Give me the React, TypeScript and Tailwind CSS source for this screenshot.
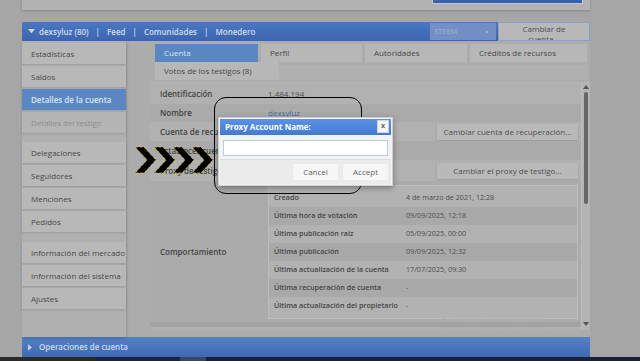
import React from "react";

const font = { fontFamily: '"Open Sans", "Noto Sans", sans-serif' };

function SideItem({ label, selected, disabled }: { label: string; selected?: boolean; disabled?: boolean }) {
  return (
    <div
      className={
        "h-[21px] flex items-center pl-[9px] text-[8px] whitespace-nowrap overflow-hidden shadow-[0_1px_2px_rgba(0,0,0,0.12)] " +
        (selected
          ? "bg-[#5a86c1] text-[#dde5f1] font-semibold"
          : disabled
          ? "bg-[#b4b4b4] text-[#8f8f8f]"
          : "bg-[#b8b8b8] text-[#484848]")
      }
    >
      {label}
    </div>
  );
}

function Tab({ label, w, selected }: { label: string; w: string; selected?: boolean }) {
  return (
    <div
      className={
        w +
        " h-[18px] flex items-center pl-[9px] text-[8px] " +
        (selected ? "bg-[#5a86c1] text-[#dde5f1]" : "bg-[#b7b7b7] text-[#484848]")
      }
    >
      {label}
    </div>
  );
}

function Row({
  label,
  value,
  button,
  dark,
  h,
  link,
}: {
  label: string;
  value?: string;
  button?: string;
  dark?: boolean;
  h: string;
  link?: boolean;
}) {
  return (
    <div className={"flex items-center " + h + " " + (dark ? "bg-[#aaaaaa]" : "bg-[#b1b1b1]")}>
      <div className="w-[118px] pl-[10px] text-[8px] font-semibold text-[#434343] whitespace-nowrap overflow-hidden">{label}</div>
      <div className={"flex-1 text-[8px] " + (link ? "text-[#4d6a96]" : "text-[#4e4e4e]")}>{value}</div>
      {button && (
        <div className="mr-[3px] w-[141px] h-[16px] flex items-center justify-center bg-[#b9b9b9] text-[8px] text-[#505050] shadow-[0_1px_2px_rgba(0,0,0,0.15)]">
          {button}
        </div>
      )}
    </div>
  );
}

const behav: [string, string][] = [
  ["Creado", "4 de marzo de 2021, 12:28"],
  ["Última hora de votación", "09/09/2025, 12:18"],
  ["Última publicación raíz", "05/09/2025, 00:00"],
  ["Última publicación", "09/09/2025, 12:32"],
  ["Última actualización de la cuenta", "17/07/2025, 09:30"],
  ["Última recuperación de cuenta", "-"],
  ["Última actualización del propietario", "-"],
];

function Chevrons() {
  const pts = (o: number) =>
    `${o},1 ${o + 9},1 ${o + 21},14 ${o + 9},27 ${o},27 ${o + 12},14`;
  return (
    <svg width="84" height="30" viewBox="0 0 84 30" className="absolute left-[134px] top-[146px]">
      {[0, 19, 38, 57].map((o) => (
        <polygon key={o} points={pts(o + 1)} fill="#000" stroke="#e2c53a" strokeWidth="0.8" strokeDasharray="3 1.5" />
      ))}
    </svg>
  );
}

export default function App() {
  return (
    <div className="relative w-[640px] h-[361px] bg-[#a6a6a6] overflow-hidden" style={font}>
      <div className="ml-[22px] w-[568px]">
        {/* top card */}
        <div className="h-[10px] bg-[#b2b2b2] shadow-[0_1px_3px_rgba(0,0,0,0.2)] relative">
          <div className="absolute left-[410px] top-0 w-[151px] h-[4px] bg-[#3561b0] border-x border-b border-[#c7c7c7]" />
        </div>
        {/* header */}
        <div className="mt-[12px] h-[19px] flex items-center bg-gradient-to-b from-[#4b78c2] to-[#3b66af] text-[8px] font-semibold text-[#d3dbe9]">
          <svg width="7" height="5" viewBox="0 0 8 6" className="ml-[6px] mr-[4px]">
            <polygon points="0,0 8,0 4,5" fill="#d3dbe9" />
          </svg>
          <span>dexsyluz (80)</span>
          <span className="mx-[7px]">|</span>
          <span>Feed</span>
          <span className="mx-[7px]">|</span>
          <span>Comunidades</span>
          <span className="mx-[7px]">|</span>
          <span>Monedero</span>
          <div className="ml-auto flex h-full items-stretch">
            <div className="w-[66px] bg-[#7290c4] text-[#a3b2cc] font-normal text-[7.5px] flex items-center pl-[4px] relative my-[1px]">
              STEEM
              <span className="absolute right-[8px] top-[8px] w-[2px] h-[2px] bg-[#a3b2cc]" />
            </div>
            <div className="ml-[2px] w-[92px] bg-[#b8b8b8] border border-[#8aa0c8] text-[#4e4e4e] font-normal text-[8px] leading-[10px] flex flex-col items-center justify-start pt-[1px] overflow-hidden">
              <span>Cambiar de</span>
              <span>cuenta...</span>
            </div>
          </div>
        </div>
        {/* main */}
        <div className="h-[296px] flex bg-[#acacac]">
          <div className="w-[104px] bg-[#b0b0b0] pt-[2px] flex flex-col gap-[2px] shadow-[1px_2px_3px_rgba(0,0,0,0.15)] pb-[8px]">
            <SideItem label="Estadísticas" />
            <SideItem label="Saldos" />
            <SideItem label="Detalles de la cuenta" selected />
            <SideItem label="Detalles del testigo" disabled />
            <div className="mt-[7px]">
              <SideItem label="Delegaciones" />
            </div>
            <SideItem label="Seguidores" />
            <SideItem label="Menciones" />
            <SideItem label="Pedidos" />
            <div className="mt-[8px]">
              <SideItem label="Información del mercado" />
            </div>
            <SideItem label="Información del sistema" />
            <SideItem label="Ajustes" />
          </div>
          <div className="flex-1 flex flex-col">
            <div className="pl-[29px] pt-[3px]">
              <div className="flex gap-[3px]">
                <Tab label="Cuenta" w="w-[103px]" selected />
                <Tab label="Perfil" w="w-[101px]" />
                <Tab label="Autoridades" w="w-[102px]" />
                <Tab label="Créditos de recursos" w="w-[117px]" />
              </div>
              <div className="flex">
                <Tab label="Votos de los testigos (8)" w="w-[124px]" />
                <div className="w-[309px] mt-[3px] h-[15px] bg-[#b0b0b0]" />
              </div>
            </div>
            <div className="ml-[24px] mt-[2px] flex h-[248px]">
              <div className="w-[431px] flex flex-col bg-[#b3b3b3]">
                <div className="h-[2px]" />
                <Row h="h-[20px]" label="Identificación" value="1.484.194" />
                <Row h="h-[18px]" label="Nombre" value="dexsyluz" link dark />
                <Row h="h-[19px]" label="Cuenta de recuperación" button="Cambiar cuenta de recuperación..." />
                <Row h="h-[19px]" label="Establecer cuenta proxy" dark />
                <Row h="h-[21px]" label="Proxy de testigo" button="Cambiar el proxy de testigo..." />
                <div className="flex items-center h-[141px] bg-[#ababab]">
                  <div className="w-[118px] pl-[10px] text-[8px] font-semibold text-[#434343]">Comportamiento</div>
                  <div className="w-[310px] bg-[#b2b2b2] border border-[#bcbcbc] py-[3px] flex flex-col">
                    {behav.map(([l, v], i) => (
                      <div
                        key={l}
                        className={"h-[18px] flex items-center text-[7.2px] " + (i % 2 === 1 ? "bg-[#a9a9a9]" : "")}
                      >
                        <div className="w-[137px] pl-[5px] font-semibold text-[#454545] whitespace-nowrap overflow-hidden">{l}</div>
                        <div className="text-[#4e4e4e]">{v}</div>
                      </div>
                    ))}
                  </div>
                </div>
                <div className="h-[5px] bg-[#a3a3a3]" />
                <div className="flex-1 bg-[#b0b0b0]" />
              </div>
              <div className="w-[9px] bg-[#b4b4b4] flex flex-col items-center border-l border-[#bdbdbd]">
                <svg width="6" height="4" viewBox="0 0 6 4" className="mt-[3px]">
                  <polygon points="3,0 6,4 0,4" fill="#555" />
                </svg>
                <div className="mt-[3px] w-[4px] h-[112px] rounded-full bg-[#666666]" />
                <div className="flex-1" />
                <svg width="6" height="4" viewBox="0 0 6 4" className="mb-[4px]">
                  <polygon points="0,0 6,0 3,4" fill="#555" />
                </svg>
              </div>
            </div>
          </div>
        </div>
        {/* bottom bar */}
        <div className="h-[20px] flex items-center bg-gradient-to-b from-[#5582c6] to-[#3e69b2] text-[8px] text-[#d0d9e8] font-semibold">
          <svg width="4" height="7" viewBox="0 0 5 8" className="ml-[6px] mr-[7px]">
            <polygon points="0,0 5,4 0,8" fill="#c7d0df" />
          </svg>
          Operaciones de cuenta
        </div>
      </div>
      {/* taskbar */}
      <div className="h-[4px] flex">
        <div className="w-[95px] bg-[#2a2a2a]" />
        <div className="w-[85px] bg-[#1a2440]" />
        <div className="w-[26px] bg-[#3a4662]" />
        <div className="flex-1 bg-[#18203a]" />
      </div>

      {/* watermark */}
      <div className="absolute left-[440px] top-[311px] text-[13px] text-[#b2b2b2] leading-none whitespace-nowrap">Activar Windows</div>
      <div className="absolute left-[440px] top-[327px] text-[7.5px] text-[#b0b0b0] leading-none whitespace-nowrap">Ve a Configuración para activar Windows.</div>

      <Chevrons />

      {/* rounded outline */}
      <div className="absolute left-[214px] top-[97px] w-[148px] h-[97px] rounded-[12px] border-[1.5px] border-black" />

      {/* dialog */}
      <div className="absolute left-[218px] top-[117px] w-[175px] h-[69px] bg-[#f3f3f3] border border-[#d0d0d0] shadow-[0_2px_6px_rgba(0,0,0,0.35)] flex flex-col p-[1px]">
        <div className="h-[16px] bg-gradient-to-b from-[#5a92e6] to-[#4479d0] flex items-center pl-[5px] text-[8px] font-bold text-white relative">
          Proxy Account Name:
          <div className="absolute right-[2px] top-[1px] w-[12px] h-[13px] bg-[#f6f6f6] border border-[#c8d6ee] text-[#666] text-[7px] flex items-center justify-center">
            x
          </div>
        </div>
        <div className="mx-[3px] mt-[5px] h-[16px] bg-white border border-[#b9cbe5]" />
        <div className="mt-[3px] flex-1 bg-[#ebebeb] border-t border-[#dcdcdc] flex items-center justify-end gap-[5px] pr-[3px]">
          <div className="w-[45px] h-[16px] bg-[#f6f6f6] text-[#666] text-[8px] flex items-center justify-center">Cancel</div>
          <div className="w-[45px] h-[16px] bg-[#f6f6f6] text-[#666] text-[8px] flex items-center justify-center">Accept</div>
        </div>
      </div>
    </div>
  );
}
